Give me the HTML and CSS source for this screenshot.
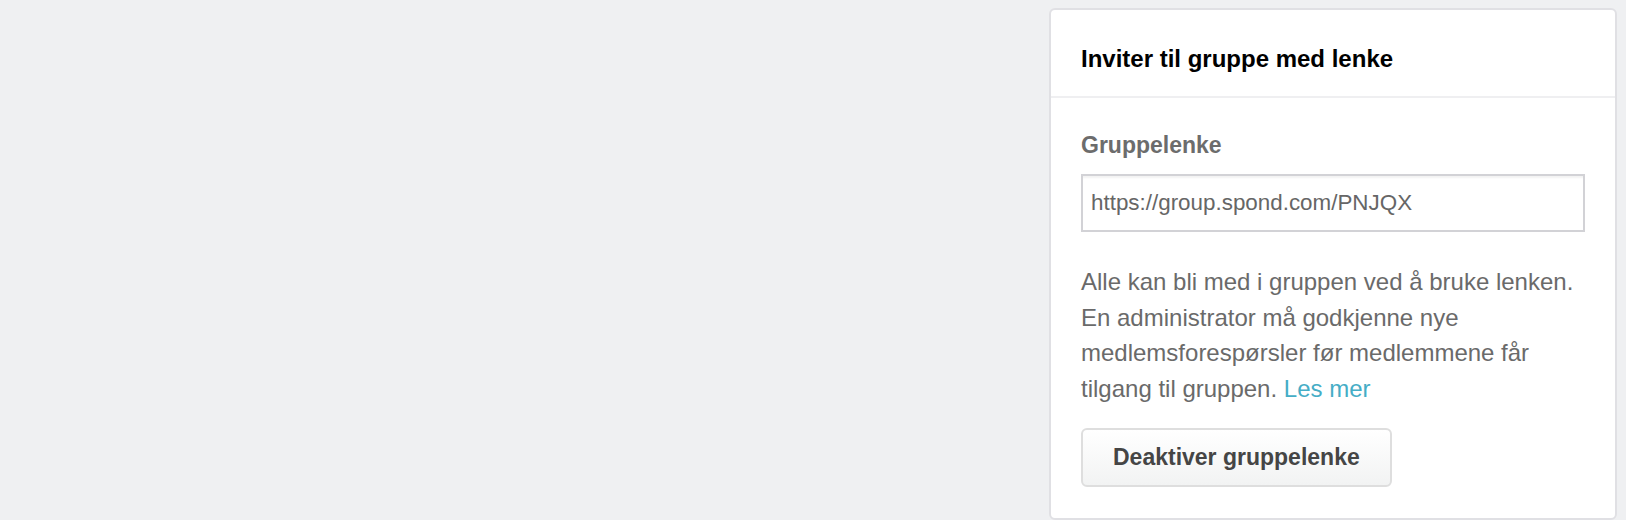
FILE: index.html
```html
<!DOCTYPE html>
<html lang="no">
<head>
    <meta charset="UTF-8">
    <meta name="viewport" content="width=device-width, initial-scale=1.0">
    <title>Gruppe - Inviter med lenke</title>
    <link rel="stylesheet" href="styles.css">
</head>
<body>
    <div class="page">
        <main class="main-area">
            <!-- group content goes here -->
        </main>

        <aside class="sidebar">
            <section class="card">
                <header class="card-header">
                    <h3>Inviter til gruppe med lenke</h3>
                </header>
                <div class="card-body">
                    <label class="field-label" for="group-link">Gruppelenke</label>
                    <input class="link-input" type="text" id="group-link" value="https://group.spond.com/PNJQX" readonly>

                    <p class="help-text">
                        Alle kan bli med i gruppen ved å bruke lenken.
                        En administrator må godkjenne nye medlemsforespørsler før medlemmene får
                        tilgang til gruppen. <a href="#">Les mer</a>
                    </p>

                    <button class="btn" type="button">Deaktiver gruppelenke</button>
                </div>
            </section>
        </aside>
    </div>
</body>
</html>
```

FILE: styles.css
```css
/* Global Styles */
body {
    font-family: "Liberation Sans", Arial, sans-serif;
    margin: 0;
    padding: 0;
    background-color: #eff0f2;
}

.page {
    display: grid;
    grid-template-columns: 1fr 568px;
    gap: 20px;
    padding: 8px 9px 0 0;
}

/* Card */
.card {
    background-color: #fff;
    border: 2px solid #e0e0e4;
    border-radius: 6px;
    box-sizing: border-box;
}

.card-header {
    padding: 35px 30px 23px;
    border-bottom: 2px solid #efeff1;
}

.card-header h3 {
    margin: 0;
    font-size: 24px;
    line-height: 28px;
    font-weight: bold;
    color: #000;
}

.card-body {
    padding: 34px 30px 31px;
    display: flex;
    flex-direction: column;
    align-items: flex-start;
}

.field-label {
    font-size: 23px;
    line-height: 26px;
    font-weight: bold;
    color: #6c6c6c;
    margin-bottom: 16px;
}

.link-input {
    width: 100%;
    height: 58px;
    box-sizing: border-box;
    padding: 0 8px;
    border: 2px solid #d2d2d6;
    border-radius: 0;
    box-shadow: inset 0 3px 2px -1px rgba(0, 0, 0, 0.05);
    font-family: inherit;
    font-size: 22.4px;
    color: #666;
    background-color: #fff;
}

.help-text {
    margin: 32px 0 22px;
    font-size: 24px;
    line-height: 35.5px;
    color: #6a6a6a;
}

.help-text a {
    color: #45adc6;
    text-decoration: none;
}

.btn {
    height: 59px;
    padding: 0 30px;
    border: 2px solid #dedede;
    border-radius: 6px;
    background: linear-gradient(#ffffff, #f2f3f3);
    font-family: inherit;
    font-size: 23px;
    font-weight: bold;
    color: #454545;
    cursor: pointer;
}
```
